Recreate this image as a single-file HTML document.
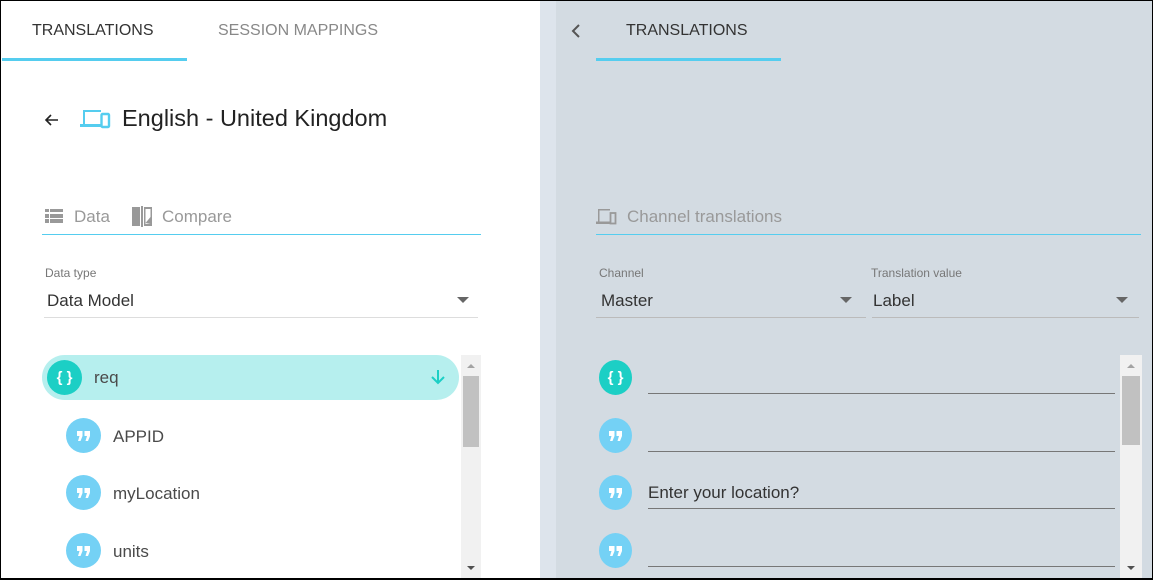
<!DOCTYPE html>
<html><head><meta charset="utf-8"><style>
*{box-sizing:border-box;margin:0;padding:0}
body{width:1153px;height:580px;overflow:hidden;font-family:"Liberation Sans",sans-serif;background:#000;position:relative}
.a{position:absolute}
.t{position:absolute;white-space:nowrap;line-height:1}
.c{position:absolute;border-radius:50%;display:flex;align-items:center;justify-content:center;color:#fff;font-weight:bold}
</style></head><body>
<svg width="0" height="0" style="position:absolute"><defs><g id="q"><path d="M0 0h5.5v5L3.5 10H1l1.5-5H0zM7.5 0H13v5l-2 5H8.5L10 5H7.5z" fill="#fff"/></g></defs></svg>
<div class="a" style="left:1px;top:1px;width:540px;height:577px;background:#fff"></div>
<div class="a" style="left:540px;top:1px;width:16px;height:577px;background:#dde4ec"></div>
<div class="a" style="left:556px;top:1px;width:596px;height:577px;background:#d3dbe2"></div>

<div class="t" style="left:32px;top:23px;font-size:16px;color:#333">TRANSLATIONS</div>
<div class="t" style="left:218px;top:23px;font-size:16px;color:#888">SESSION MAPPINGS</div>
<div class="a" style="left:2px;top:58px;width:185px;height:3px;background:#55cdef"></div>

<svg class="a" style="left:43px;top:111px" width="18" height="18" viewBox="0 0 18 18"><path d="M15 9H3M8 4L3 9l5 5" stroke="#222" stroke-width="1.6" fill="none"/></svg>
<svg class="a" style="left:79px;top:108px" width="32" height="22" viewBox="0 0 32 22"><path d="M4 2h18v2H6v12H4z M1 16h21v3H1z" fill="#55cdef"/><rect x="22.5" y="6" width="7.5" height="13" rx="1" fill="none" stroke="#55cdef" stroke-width="2.4"/></svg>
<div class="t" style="left:122px;top:107px;font-size:23.5px;color:#222">English - United Kingdom</div>

<svg class="a" style="left:45px;top:209px" width="18" height="14" viewBox="0 0 18 14"><path d="M0 0h4v3H0zM5 0h13v3H5zM0 5h4v4H0zM5 5h13v4H5zM0 10h4v4H0zM5 10h13v4H5z" fill="#999"/></svg>
<div class="t" style="left:74px;top:208px;font-size:17px;color:#999">Data</div>
<svg class="a" style="left:132px;top:206px" width="20" height="21" viewBox="0 0 20 21"><path d="M0 1h8v19H0zM9 0h2v21H9zM12 1h8v19h-8z" fill="#999"/><path d="M13.5 3h5v15h-5z" fill="#fff"/><path d="M13.5 17l5-6v7z" fill="#999"/></svg>
<div class="t" style="left:162px;top:208px;font-size:17px;color:#999">Compare</div>
<div class="a" style="left:42px;top:234px;width:439px;height:1px;background:#55cdef"></div>

<div class="t" style="left:45px;top:267px;font-size:12px;color:#777">Data type</div>
<div class="t" style="left:47px;top:292px;font-size:17px;color:#333">Data Model</div>
<div class="a" style="left:457px;top:297px;border-left:6px solid transparent;border-right:6px solid transparent;border-top:6px solid #666"></div>
<div class="a" style="left:44px;top:317px;width:434px;height:1px;background:#ddd"></div>

<div class="a" style="left:42px;top:355px;width:417px;height:45px;border-radius:23px;background:#b6efee"></div>
<div class="c" style="left:47px;top:360px;width:35px;height:35px;background:#1ccfc5;font-size:15px">{ }</div>
<div class="t" style="left:94px;top:369px;font-size:17px;color:#4a4a4a">req</div>
<svg class="a" style="left:429px;top:368px" width="18" height="18" viewBox="0 0 18 18"><path d="M9 2v13M3 9l6 6 6-6" stroke="#1ccfc5" stroke-width="2" fill="none"/></svg>

<div class="c" style="left:66px;top:418px;width:35px;height:35px;background:#74d1f5"><svg width="13" height="10"><use href="#q"/></svg></div>
<div class="t" style="left:113px;top:428px;font-size:17px;color:#4a4a4a">APPID</div>
<div class="c" style="left:66px;top:475px;width:35px;height:35px;background:#74d1f5"><svg width="13" height="10"><use href="#q"/></svg></div>
<div class="t" style="left:113px;top:485px;font-size:17px;color:#4a4a4a">myLocation</div>
<div class="c" style="left:66px;top:533px;width:35px;height:35px;background:#74d1f5"><svg width="13" height="10"><use href="#q"/></svg></div>
<div class="t" style="left:113px;top:543px;font-size:17px;color:#4a4a4a">units</div>

<div class="a" style="left:461px;top:355px;width:20px;height:223px;background:#f1f1f1"></div>
<div class="a" style="left:463px;top:376px;width:16px;height:71px;background:#c1c1c1"></div>
<div class="a" style="left:467px;top:364px;border-left:4px solid transparent;border-right:4px solid transparent;border-bottom:4px solid #a3a3a3"></div>
<div class="a" style="left:467px;top:566px;border-left:4px solid transparent;border-right:4px solid transparent;border-top:4px solid #505050"></div>

<svg class="a" style="left:569px;top:23px" width="14" height="16" viewBox="0 0 14 16"><path d="M10 2L4 8l6 6" stroke="#555" stroke-width="2" fill="none"/></svg>
<div class="t" style="left:626px;top:23px;font-size:16px;color:#333">TRANSLATIONS</div>
<div class="a" style="left:596px;top:58px;width:185px;height:3px;background:#55cdef"></div>

<svg class="a" style="left:595px;top:208px" width="22" height="17" viewBox="0 0 22 17"><path d="M3 1h12v1.5H4.5v11H3zM1 13.5h14V16H1z" fill="#999"/><rect x="15.5" y="5" width="5" height="10.5" fill="none" stroke="#999" stroke-width="1.8"/></svg>
<div class="t" style="left:627px;top:208px;font-size:17px;color:#999">Channel translations</div>
<div class="a" style="left:596px;top:234px;width:545px;height:1px;background:#55cdef"></div>

<div class="t" style="left:599px;top:267px;font-size:12px;color:#777">Channel</div>
<div class="t" style="left:601px;top:292px;font-size:17px;color:#333">Master</div>
<div class="a" style="left:840px;top:297px;border-left:6px solid transparent;border-right:6px solid transparent;border-top:6px solid #666"></div>
<div class="a" style="left:596px;top:317px;width:270px;height:1px;background:#bbb"></div>
<div class="t" style="left:871px;top:267px;font-size:12px;color:#777">Translation value</div>
<div class="t" style="left:873px;top:292px;font-size:17px;color:#333">Label</div>
<div class="a" style="left:1116px;top:297px;border-left:6px solid transparent;border-right:6px solid transparent;border-top:6px solid #666"></div>
<div class="a" style="left:872px;top:317px;width:267px;height:1px;background:#bbb"></div>

<div class="c" style="left:599px;top:360px;width:33px;height:35px;background:#1ccfc5;font-size:15px">{ }</div>
<div class="a" style="left:648px;top:393px;width:467px;height:1px;background:#777"></div>
<div class="c" style="left:599px;top:418px;width:33px;height:35px;background:#74d1f5"><svg width="13" height="10"><use href="#q"/></svg></div>
<div class="a" style="left:648px;top:451px;width:467px;height:1px;background:#777"></div>
<div class="c" style="left:599px;top:475px;width:33px;height:35px;background:#74d1f5"><svg width="13" height="10"><use href="#q"/></svg></div>
<div class="t" style="left:648px;top:484px;font-size:17px;color:#333">Enter your location?</div>
<div class="a" style="left:648px;top:508px;width:467px;height:1px;background:#777"></div>
<div class="c" style="left:599px;top:533px;width:33px;height:35px;background:#74d1f5"><svg width="13" height="10"><use href="#q"/></svg></div>
<div class="a" style="left:648px;top:566px;width:467px;height:1px;background:#777"></div>

<div class="a" style="left:1120px;top:355px;width:22px;height:223px;background:#f1f1f1"></div>
<div class="a" style="left:1122px;top:376px;width:18px;height:69px;background:#c1c1c1"></div>
<div class="a" style="left:1127px;top:364px;border-left:4px solid transparent;border-right:4px solid transparent;border-bottom:4px solid #a3a3a3"></div>
<div class="a" style="left:1127px;top:566px;border-left:4px solid transparent;border-right:4px solid transparent;border-top:4px solid #505050"></div>
</body></html>
